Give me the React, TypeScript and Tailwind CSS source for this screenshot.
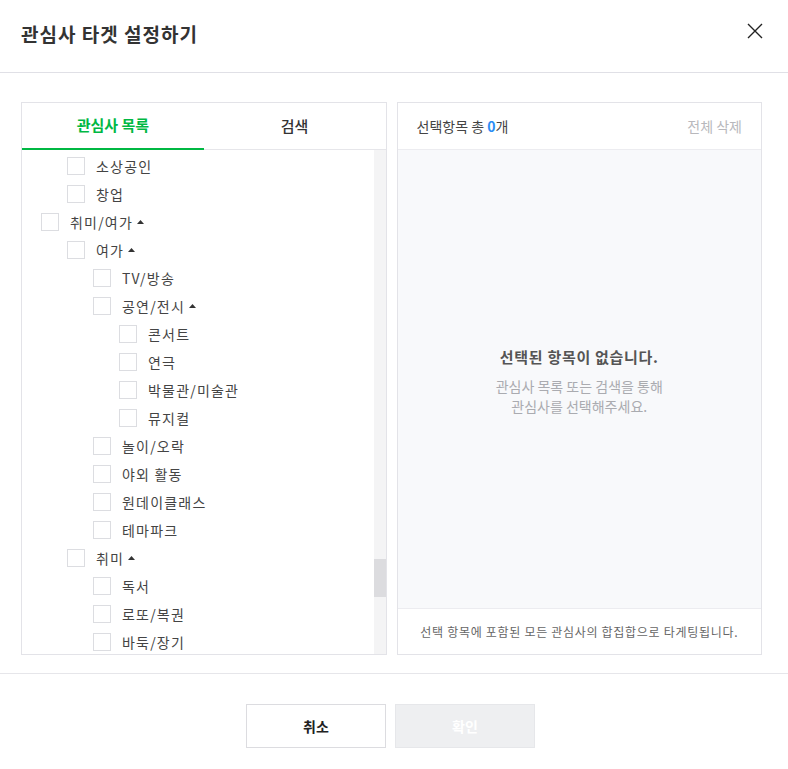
type Item = { label: string; depth: number; open?: boolean };

const items: Item[] = [
  { label: "소상공인", depth: 1 },
  { label: "창업", depth: 1 },
  { label: "취미/여가", depth: 0, open: true },
  { label: "여가", depth: 1, open: true },
  { label: "TV/방송", depth: 2 },
  { label: "공연/전시", depth: 2, open: true },
  { label: "콘서트", depth: 3 },
  { label: "연극", depth: 3 },
  { label: "박물관/미술관", depth: 3 },
  { label: "뮤지컬", depth: 3 },
  { label: "놀이/오락", depth: 2 },
  { label: "야외 활동", depth: 2 },
  { label: "원데이클래스", depth: 2 },
  { label: "테마파크", depth: 2 },
  { label: "취미", depth: 1, open: true },
  { label: "독서", depth: 2 },
  { label: "로또/복권", depth: 2 },
  { label: "바둑/장기", depth: 2 },
];

const indent = ["pl-[19px]", "pl-[45px]", "pl-[71px]", "pl-[97px]"];

function Caret() {
  return (
    <svg className="ml-[4px] w-[7px] h-[4px]" viewBox="0 0 7 4">
      <path d="M3.5 0L7 4H0z" fill="#333" />
    </svg>
  );
}

function Row({ item }: { item: Item }) {
  return (
    <div className={`h-[28px] flex items-center ${indent[item.depth]}`}>
      <span className="w-[18px] h-[18px] border border-[#dcdde1] bg-white flex-shrink-0" />
      <span className="ml-[11px] text-[14px] tracking-[1.2px] text-[#444] leading-none">{item.label}</span>
      {item.open && <Caret />}
    </div>
  );
}

export default function App() {
  return (
    <div
      className="w-[788px] h-[769px] bg-white flex flex-col overflow-hidden"
      style={{ fontFamily: '"Noto Sans CJK KR", "Noto Sans", sans-serif' }}
    >
      {/* header */}
      <div className="h-[73px] border-b border-[#e0e0e6] flex items-center justify-between pl-[21px] pr-[25px] flex-shrink-0">
        <h2 className="text-[19px] font-bold text-[#333] tracking-[1px] pb-[3px]">관심사 타겟 설정하기</h2>
        <svg className="w-[16px] h-[16px] mb-[11px]" viewBox="0 0 16 16" fill="none" stroke="#222" strokeWidth={1.4}>
          <path d="M1 1l14 14M15 1L1 15" />
        </svg>
      </div>

      {/* body */}
      <div className="flex gap-[10px] pl-[21px] pr-[26px] pt-[29px] pb-[18px] border-b border-[#e6e6ea] flex-shrink-0">
        {/* interest tree */}
        <div className="flex-1 h-[553px] border border-[#e3e3e8] flex flex-col">
          <div className="h-[47px] flex border-b border-[#e6e6ea] flex-shrink-0">
            <div className="flex-1 flex items-center justify-center border-b-2 border-[#00b843] -mb-[1px] text-[15px] font-bold text-[#00b843]">
              관심사 목록
            </div>
            <div className="flex-1 flex items-center justify-center text-[15px] font-medium text-[#333]">검색</div>
          </div>
          <div className="flex-1 flex min-h-0">
            <div className="flex-1 overflow-hidden pt-[2px]">
              {items.map((it, i) => (
                <Row key={i} item={it} />
              ))}
            </div>
            <div className="w-[12px] bg-[#f4f4f5] flex flex-col">
              <div className="h-[409px]" />
              <div className="h-[38px] bg-[#dcdcdf]" />
            </div>
          </div>
        </div>

        {/* selected items */}
        <div className="flex-1 h-[553px] border border-[#e3e3e8] flex flex-col">
          <div className="h-[47px] flex items-center justify-between pl-[19px] pr-[19px] border-b border-[#ececf0] flex-shrink-0">
            <span className="text-[14px] text-[#444]">
              선택항목 총 <b className="text-[#2b8ef5]">0</b>개
            </span>
            <span className="text-[14px] text-[#b8b8bc]">전체 삭제</span>
          </div>
          <div className="flex-1 bg-[#f8f9fb] flex flex-col items-center justify-center pt-[4px]">
            <p className="text-[15px] font-bold tracking-[0.7px] text-[#555]">선택된 항목이 없습니다.</p>
            <p className="mt-[8px] text-[14px] leading-[20px] text-[#aaabb0] text-center">
              관심사 목록 또는 검색을 통해
              <br />
              관심사를 선택해주세요.
            </p>
          </div>
          <div className="h-[46px] border-t border-[#ececf0] flex items-center justify-center flex-shrink-0">
            <span className="text-[12px] tracking-[0.7px] text-[#666]">
              선택 항목에 포함된 모든 관심사의 합집합으로 타게팅됩니다.
            </span>
          </div>
        </div>
      </div>

      {/* footer buttons */}
      <div className="flex justify-center gap-[9px] pt-[30px] pr-[7px]">
        <button className="w-[140px] h-[44px] border border-[#dcdce0] bg-white text-[14px] font-bold text-[#222]">
          취소
        </button>
        <button className="w-[140px] h-[44px] border border-[#e6e7ea] bg-[#eeeff1] text-[14px] font-bold text-white">
          확인
        </button>
      </div>
    </div>
  );
}
